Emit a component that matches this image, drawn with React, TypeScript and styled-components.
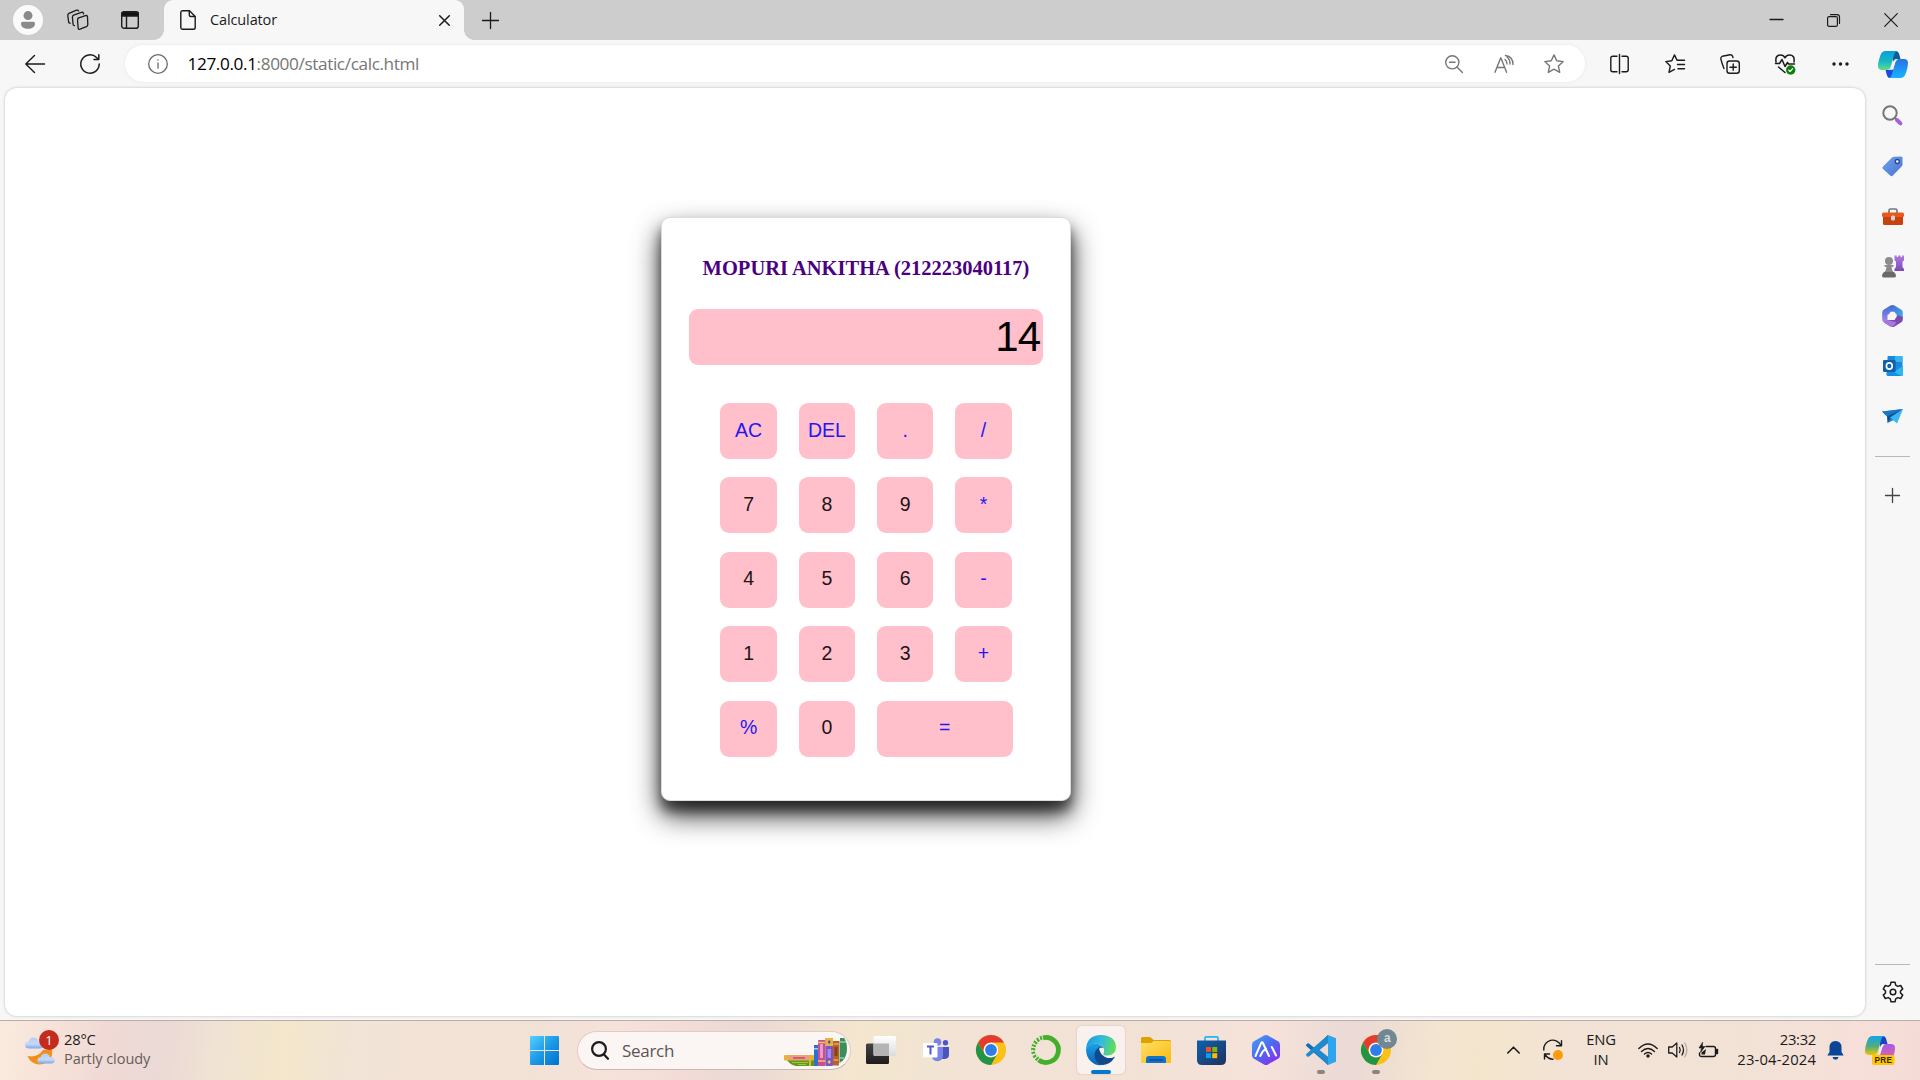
import React from 'react';
import styled, { createGlobalStyle } from 'styled-components';

const GlobalStyle = createGlobalStyle`
  *, *::before, *::after { box-sizing: border-box; }
  body { margin: 0; overflow: hidden; background: #f7f7f7; }
`;

const uiFont = `"Open Sans", "Noto Sans", sans-serif`;

const Desktop = styled.div`
  width: 1920px;
  height: 1080px;
  display: flex;
  flex-direction: column;
  overflow: hidden;
  font-family: ${uiFont};
  color: #1b1b1b;
`;

const Svg = styled.svg`
  display: block;
  flex: none;
  overflow: visible;
`;

const Slot = styled.div<{ $w: number }>`
  width: ${p => p.$w}px;
  flex: none;
  display: flex;
  align-items: center;
  justify-content: center;
`;

/* ---------- title bar ---------- */

const TitleBar = styled.header`
  height: 40px;
  flex: none;
  display: flex;
  align-items: stretch;
  background: #cdcdcd;
`;

const Avatar = styled.div`
  width: 30px;
  height: 30px;
  border-radius: 50%;
  background: #fafafa;
  display: flex;
  align-items: center;
  justify-content: center;
`;

const Tab = styled.div`
  position: relative;
  width: 300px;
  height: 40px;
  margin-left: 4px;
  padding: 0 11px 0 16px;
  display: flex;
  align-items: center;
  background: #f7f7f7;
  border-radius: 9px 9px 0 0;
  &::before, &::after {
    content: '';
    position: absolute;
    bottom: 0;
    width: 10px;
    height: 10px;
  }
  &::before {
    left: -10px;
    background: radial-gradient(circle at 0 0, transparent 9.5px, #f7f7f7 10px);
  }
  &::after {
    right: -10px;
    background: radial-gradient(circle at 100% 0, transparent 9.5px, #f7f7f7 10px);
  }
`;

const TabTitle = styled.span`
  flex: 1;
  margin-left: 14px;
  font-size: 14.5px;
  line-height: 20px;
  letter-spacing: -0.12px;
`;

const WindowButtons = styled.div`
  margin-left: auto;
  padding-right: 1px;
  display: flex;
`;

/* ---------- toolbar ---------- */

const Toolbar = styled.div`
  height: 47px;
  flex: none;
  display: flex;
  align-items: center;
  padding-left: 7px;
  background: #f7f7f7;
`;

const AddressBar = styled.div`
  width: 1460px;
  height: 37px;
  margin: 0 6px 0 7px;
  display: flex;
  align-items: center;
  border-radius: 19px;
  background: #fff;
  box-shadow: 0 0 4px rgba(0, 0, 0, 0.06);
`;

const Url = styled.div`
  flex: 1;
  margin-left: -2.5px;
  font-size: 17.2px;
  line-height: 24px;
  letter-spacing: -0.38px;
  color: #767676;
  white-space: nowrap;
  b { font-weight: 400; color: #000; }
`;

const CopilotButton = styled.div`
  width: 51px;
  flex: none;
  display: flex;
  justify-content: center;
  padding-top: 2px;
`;

/* ---------- browser body ---------- */

const Body = styled.main`
  height: 933px;
  flex: none;
  display: flex;
  padding: 1px 0 4px 5px;
  background: #f7f7f7;
`;

const Page = styled.section`
  width: 1860px;
  height: 928px;
  border-radius: 12px;
  background: #fff;
  box-shadow: 0 0 3px rgba(0, 0, 0, 0.25);
  display: flex;
  align-items: flex-start;
  padding: 129px 0 0 656px;
`;

const Sidebar = styled.aside`
  width: 55px;
  margin-bottom: -3px;
  display: flex;
  flex-direction: column;
  align-items: center;
`;

const SideCell = styled.div<{ $h?: number }>`
  height: ${p => p.$h ?? 50}px;
  width: 55px;
  flex: none;
  display: flex;
  align-items: center;
  justify-content: center;
`;

const SideRule = styled.div`
  width: 35px;
  height: 1px;
  flex: none;
  background: #b9b9b9;
`;

const Spacer = styled.div`
  flex: 1;
`;

/* ---------- calculator ---------- */

const Calculator = styled.div`
  width: 410px;
  height: 583.5px;
  border: 1px solid #dcdcdc;
  border-radius: 9px;
  background: #fff;
  display: flex;
  flex-direction: column;
  align-items: center;
  box-shadow: 0 14px 28px rgba(0, 0, 0, 0.8), 0 10px 12px rgba(0, 0, 0, 0.5);
`;

const Heading = styled.h2`
  margin: 36px 0 0;
  font: bold 20.5px/28px "Liberation Serif", serif;
  color: #4b0082;
  white-space: nowrap;
`;

const Display = styled.output`
  width: 354px;
  height: 56px;
  margin-top: 27px;
  padding: 0 3px 0 0;
  border-radius: 9px;
  background: #ffc0cb;
  text-align: right;
  font: 42px/56px "Liberation Sans", sans-serif;
  letter-spacing: -1px;
  color: #000;
`;

const Keys = styled.div`
  margin-top: 38px;
  display: grid;
  grid-template-columns: repeat(4, 56.2px);
  grid-auto-rows: 56.1px;
  gap: 18.3px 22.1px;
`;

const Key = styled.button<{ $op?: boolean; $wide?: boolean }>`
  width: ${p => (p.$wide ? '135.500px' : 'auto')};
  grid-column: ${p => (p.$wide ? 'span 2' : 'auto')};
  padding: 0 0 2px;
  border: 0;
  border-radius: 9px;
  background: #ffc0cb;
  font: 19.5px "Liberation Sans", sans-serif;
  color: ${p => (p.$op ? '#2416f5' : '#1c1416')};
`;

const keys: { label: string; op?: boolean; wide?: boolean }[] = [
  { label: 'AC', op: true }, { label: 'DEL', op: true }, { label: '.', op: true }, { label: '/', op: true },
  { label: '7' }, { label: '8' }, { label: '9' }, { label: '*', op: true },
  { label: '4' }, { label: '5' }, { label: '6' }, { label: '-', op: true },
  { label: '1' }, { label: '2' }, { label: '3' }, { label: '+', op: true },
  { label: '%', op: true }, { label: '0' }, { label: '=', op: true, wide: true },
];

/* ---------- taskbar ---------- */

const Taskbar = styled.footer`
  height: 60px;
  flex: none;
  display: flex;
  align-items: center;
  padding-bottom: 1px;
  border-top: 1px solid #b8aea8;
  background: linear-gradient(97deg,
    #faeadd 0, #f7e3d9 50px, #f1dad6 105px, #ead9d5 165px, #f0e2d4 215px, #f4e7cb 285px,
    #f2e4d6 350px, #f2e2d6 540px, #f6e2da 620px, #f3dcd7 680px, #ead9d5 745px, #f4e6cf 850px, #f3e6cf 880px,
    #f2e3d6 960px, #f2e2d6 1150px, #f6e2da 1260px, #ead9d5 1345px, #f3e5d0 1430px, #f4e6cd 1480px,
    #f2e3d6 1560px, #f2e2d6 1740px, #f6dfd9 1860px, #f4dad6 1920px);
`;

const Weather = styled.div`
  width: 517px;
  padding-left: 25px;
  display: flex;
  align-items: center;
`;

const WeatherIcon = styled.div`
  position: relative;
  width: 39px;
  height: 46px;
`;

const Badge = styled.span`
  position: absolute;
  left: 14px;
  top: 3px;
  width: 20px;
  height: 20px;
  border-radius: 50%;
  background: #c42b1c;
  color: #fff;
  font-size: 13px;
  line-height: 20px;
  text-align: center;
`;

const Lines = styled.div<{ $align?: string }>`
  display: flex;
  flex-direction: column;
  padding-bottom: 2px;
  font-size: 14.8px;
  line-height: 20px;
  letter-spacing: -0.25px;
  text-align: ${p => p.$align ?? 'left'};
  white-space: nowrap;
`;

const Muted = styled.span`
  color: #635d59;
  font-size: 14.5px;
  letter-spacing: -0.05px;
`;

const SearchBox = styled.div`
  width: 274px;
  height: 39px;
  margin: 0 2px 0 5px;
  padding: 0 2px 0 13px;
  display: flex;
  align-items: center;
  border: 1px solid #ddcdc7;
  border-bottom-color: #c9b8b2;
  border-radius: 20px;
  background: #fbf6f3;
  font-size: 17px;
  letter-spacing: -0.3px;
  color: #5b5552;
`;

const SearchLabel = styled.span`
  flex: 1;
  margin-left: 13px;
`;

const SearchArt = styled.div`
  padding-top: 4px;
`;

const AppButton = styled.div<{ $active?: boolean }>`
  position: relative;
  width: 48px;
  height: 48px;
  margin: 0 3.55px;
  flex: none;
  border-radius: 5px;
  display: flex;
  align-items: center;
  justify-content: center;
  background: ${p => (p.$active ? '#f9f1ed' : 'transparent')};
  box-shadow: ${p => (p.$active ? '0 0 1px 1px rgba(180,150,140,.18)' : 'none')};
`;

const Running = styled.span<{ $active?: boolean }>`
  position: absolute;
  bottom: 0;
  left: 50%;
  transform: translateX(-50%);
  width: ${p => (p.$active ? 20 : 8)}px;
  height: 4px;
  border-radius: 2px;
  background: ${p => (p.$active ? '#0078d4' : '#8b8380')};
`;

const ProfileBadge = styled.span`
  position: absolute;
  left: 25px;
  top: 3px;
  width: 20px;
  height: 20px;
  border-radius: 50%;
  background: #718792;
  color: #d5dde1;
  font: bold 12px/19px "Liberation Sans", sans-serif;
  text-align: center;
`;

const Tray = styled.div`
  margin-left: auto;
  display: flex;
  align-items: center;
`;

const Clock = styled(Lines)`
  width: 89px;
  padding-right: 1px;
  letter-spacing: 0.15px;
`;

const Time = styled.span`
  letter-spacing: -0.3px;
`;

/* ---------- line icons ---------- */

type LineProps = { w: number; h: number; c?: string; s?: number; children: React.ReactNode };
const Line = ({ w, h, c = '#1b1b1b', s = 1.3, children }: LineProps) => (
  <Svg width={w} height={h} viewBox={`0 0 ${w} ${h}`} fill="none" stroke={c} strokeWidth={s} strokeLinecap="round" strokeLinejoin="round">
    {children}
  </Svg>
);

const Person = () => (
  <Svg width="14" height="18" viewBox="0 0 14 18" fill="#8a8a8a">
    <circle cx="7" cy="4.6" r="4.5" />
    <path d="M1.6 10.800h10.800a1.600 1.600 0 0 1 1.600 1.600c0 3.300-3 5.400-7 5.400s-7-2.100-7-5.400a1.600 1.600 0 0 1 1.600-1.600z" />
  </Svg>
);

const Workspaces = () => (
  <Line w={22} h={22} s={1.3}>
    <path d="M11 9.200 18.500 6.600q1.800-.5 2 1.200l.3 7.800q0 1.500-1.400 2.100l-6.400 2.500q-1.600.5-1.800-1l-.7-8q0-1.500 1.200-2z" />
    <path d="M7.500 16.600q-1.200.1-1.400-1.200l-.7-7.200q0-1.500 1.200-2l7.800-2.900q1.600-.4 2 .9l.1.600" />
    <path d="M3.200 14.200q-1.300.1-1.600-1.200L.8 6.300q0-1.500 1.200-2L9.500 1.200q1.600-.5 2.100.7" />
  </Line>
);

const TabActions = () => (
  <Line w={18} h={18} s={1.4}>
    <rect x="0.700" y="0.700" width="16.600" height="16.600" rx="2.400" />
    <path d="M1 1.500h16v3.500H1z" fill="#111" />
    <path d="M5.500 5v12" />
  </Line>
);

const Doc = () => (
  <Line w={16} h={20} s={1.4}>
    <path d="M2.500.8h7L15.200 6.500v11a1.800 1.800 0 0 1-1.800 1.800H2.500A1.800 1.800 0 0 1 .8 17.500v-15A1.800 1.800 0 0 1 2.500.8z" />
    <path d="M9.300 1v4a1.500 1.500 0 0 0 1.500 1.500H15" />
  </Line>
);

const Cross = ({ n, s = 1.300 }: { n: number; s?: number }) => (
  <Line w={n} h={n} s={s}><path d={`M.7.7 ${n - 0.7} ${n - 0.7}M${n - 0.7} .7.7 ${n - 0.7}`} /></Line>
);

const Plus = ({ n, c }: { n: number; c?: string }) => (
  <Line w={n} h={n} s={1.300} c={c}><path d={`M${n / 2} .5V${n - 0.5}M.5 ${n / 2}H${n - 0.5}`} /></Line>
);

const Gear = () => (
  <Line w={22} h={22} s={1.5}>
    <path d="M9 1.200h4l.7 3 2.100 1.200 2.900-.9 2 3.400-2.200 2.100v2l2.200 2.100-2 3.400-2.900-.9-2.100 1.200-.7 3H9l-.7-3-2.100-1.200-2.900.9-2-3.400 2.200-2.100v-2L1.300 7.900l2-3.400 2.900.9 2.100-1.200z" />
    <circle cx="11" cy="11" r="2.800" />
  </Line>
);

/* ---------- coloured icons ---------- */

const Copilot = ({ pre }: { pre?: boolean }) => {
  const id = pre ? 'cpre' : 'cp';
  return (
    <Svg width="30" height={pre ? 29 : 27} viewBox={pre ? '0 0 30 29' : '0 0 30 27'}>
      <defs>
        <linearGradient id={id + 'a'} x1="0" y1="0" x2="0" y2="1">
          <stop offset="0" stopColor={pre ? '#12a5ec' : '#0a9ddb'} /><stop offset=".55" stopColor={pre ? '#4fae7c' : '#18b8c4'} /><stop offset="1" stopColor={pre ? '#f5c400' : '#5fdc8c'} />
        </linearGradient>
        <linearGradient id={id + 'b'} x1="0" y1="0" x2="0" y2="1">
          <stop offset="0" stopColor={pre ? '#a45be8' : '#2a72e0'} /><stop offset="1" stopColor={pre ? '#f06a8c' : '#16b4ff'} />
        </linearGradient>
      </defs>
      <path d="M14 0h4q2.200 0 3 2.500L22.500 8H19q-3 0-4 3z" fill={pre ? '#1645c8' : '#10599a'} />
      <path d="M16 27h-4q-2.200 0-3-2.500L7.500 19H11q3 0 4-3z" fill={pre ? '#f29b2c' : '#1a49dc'} />
      <path d="M7.500 0H19q-2 .5-3 4l-3 11q-1 4-4 4H4q-4 0-4-4Q0 11 2.500 4 4 0 7.500 0z" fill={`url(#${id}a)`} />
      <path d="M22.500 27H11q2-.5 3-4l3-11q1-4 4-4h5q4 0 4 4 0 4-2.500 11-1.500 4-5 4z" fill={`url(#${id}b)`} />
      <path d="M17 8.500h2.500q-1.700.8-2.300 3L15 18.300q-.8 1-2.300.9.900-.6 1.600-3z" fill="#f7f7f7" />
      {pre && <rect x="7" y="19" width="22.500" height="10" rx="2" fill="#fcc608" />}
      {pre && <text x="18.300" y="27" textAnchor="middle" fontFamily="Liberation Sans, sans-serif" fontWeight="bold" fontSize="8.200" letterSpacing=".3" fill="#3a2600">PRE</text>}
    </Svg>
  );
};

const SideSearch = () => (
  <Svg width="21" height="21" viewBox="0 0 21 21" fill="none">
    <circle cx="8" cy="8" r="6.700" stroke="#767676" strokeWidth="2" />
    <path d="m12.800 12.800 1.500 1.500" stroke="#767676" strokeWidth="2" />
    <path d="m15 15 3.400 3.400" stroke="#a164d8" strokeWidth="4" strokeLinecap="round" />
  </Svg>
);

const Tag = () => (
  <Svg width="21" height="21" viewBox="0 0 21 21">
    <defs><linearGradient id="tg" x1="0" y1="0" x2="1" y2="1"><stop offset="0" stopColor="#6fa4ee" /><stop offset="1" stopColor="#4a72d0" /></linearGradient></defs>
    <path d="M12 .8 19 .5q1.500 0 1.500 1.500v6.600q0 1-.7 1.700l-9 9.200q-1.300 1.300-2.600 0L1 13q-1.300-1.300 0-2.600l9-8.900q.8-.7 2-.7z" fill="url(#tg)" />
    <circle cx="15.300" cy="5.500" r="2" fill="#fff" stroke="#24468e" strokeWidth="1.300" />
  </Svg>
);

const Toolbox = () => (
  <Svg width="22" height="18" viewBox="0 0 22 18">
    <path d="M7 5V2.500Q7 1 8.500 1h5Q15 1 15 2.500V5" fill="none" stroke="#777" strokeWidth="1.700" />
    <path d="M1 8h20v7.500q0 1.500-1.500 1.500h-17Q1 17 1 15.500z" fill="#c8420f" />
    <path d="M1.500 4.500h19q1.500 0 1.500 1.500v1.500Q22 9 20.500 9h-19Q0 9 0 7.500V6q0-1.500 1.500-1.500z" fill="#e85a1c" />
    <rect x="9" y="7.500" width="4" height="5" rx="1.500" fill="#d4d4d4" />
  </Svg>
);

const Games = () => (
  <Svg width="22" height="23" viewBox="0 0 22 23">
    <defs><linearGradient id="gm" x1="0" y1="0" x2="0" y2="1"><stop offset="0" stopColor="#b47be0" /><stop offset="1" stopColor="#7a48b8" /></linearGradient></defs>
    <path d="M12.500.5h2.200V2h1.500V.5h2.400V2h1.500V.5H22v5l-1.500 1v5.500l1.500 2v2H12.500v-2l1.500-2V6.500l-1.500-1z" fill="url(#gm)" />
    <circle cx="7" cy="6" r="4" fill="#8c8c8c" />
    <path d="M2.500 10h9v1.800H9.500q.2 4 2 5.200H2.500q1.800-1.200 2-5.200h-2z" fill="#8a8a8a" />
    <path d="M2 17h10q2 2 2 3.700Q14 22.500 12.500 22.500h-11Q0 22.500 0 20.700 0 19 2 17z" fill="#6a6a6a" />
  </Svg>
);

const M365 = () => (
  <Svg width="21" height="22" viewBox="0 0 21 22">
    <defs>
      <linearGradient id="m1" x1="0" y1="0" x2="1" y2="1"><stop offset="0" stopColor="#4a5ec8" /><stop offset="1" stopColor="#3fb6f0" /></linearGradient>
      <linearGradient id="m2" x1="0" y1="0" x2="0" y2="1"><stop offset="0" stopColor="#3a6fd8" /><stop offset="1" stopColor="#b98ae6" /></linearGradient>
    </defs>
    <path d="M8.500.6q2-1 4 0l6.500 4q1.800 1 1.800 3V13L14.500 9.500 10 6.500 6 4z" fill="url(#m1)" />
    <path d="M8.500.6 2 4.600Q.2 5.600.2 7.600v7q0 2 1.800 3l3.500 2V10L11 6.500z" fill="url(#m2)" />
    <path d="M20.800 12v2.600q0 2-1.800 3l-6.500 4q-2 1-4 0L2 17.600 6 15h6l3-5.500z" fill="#7d4ab0" />
    <path d="m2 17.600 6.500 4q1 .4 2 .4l4-4.500L6 15z" fill="#a878e0" />
    <path d="M8.500 6.800h4L15 11l-2.500 4h-4L6.200 11z" fill="#f7f7f7" />
  </Svg>
);

const Outlook = () => (
  <Svg width="20" height="20" viewBox="0 0 20 20">
    <path d="M5.500 0h13q1 0 1 1v10H4.500V1q0-1 1-1z" fill="#1a8ad8" />
    <path d="M12 0h6.500q1 0 1 1v5H12z" fill="#36b5f0" />
    <path d="M3.500 10 19.800 10v8.500q0 1.500-1.500 1.500H5q-1.500 0-1.500-1.500z" fill="#1490df" />
    <path d="m19.800 10-9 6 7.500 4q1.500 0 1.500-1.500z" fill="#2fb8f2" />
    <rect x="0" y="4" width="12.600" height="12" rx="1.200" fill="#0f5fb4" />
    <ellipse cx="6.300" cy="10" rx="2.900" ry="3.200" fill="none" stroke="#fff" strokeWidth="1.700" />
  </Svg>
);

const Plane = () => (
  <Svg width="21" height="15" viewBox="0 0 21 15">
    <path d="M0 2.500 21 0 6 8z" fill="#2b9de2" />
    <path d="M0 2.500 5 7.500 21 0z" fill="#1876c4" />
    <path d="M5 7.200 21 0 5.500 14z" fill="#0b4f93" />
    <path d="M21 0 8 8.500l7 6z" fill="#39b8f4" />
    <path d="m5.500 14 3-5 3 2z" fill="#1b7ccc" />
  </Svg>
);

const Cloudy = () => (
  <Svg width="32" height="30" viewBox="0 0 32 30">
    <defs>
      <linearGradient id="cl" x1="0" y1="0" x2="0" y2="1"><stop offset="0" stopColor="#b5cdf2" /><stop offset=".6" stopColor="#c4dafa" /><stop offset="1" stopColor="#7fa6e8" /></linearGradient>
      <linearGradient id="mn" x1="0" y1="0" x2="1" y2="1"><stop offset="0" stopColor="#e8801a" /><stop offset="1" stopColor="#f6a21c" /></linearGradient>
    </defs>
    <path d="M27 13q2 15-13.500 15.500Q6 28 2.500 20q10 2 15.500-6z" fill="url(#mn)" />
    <path d="M4.500 12.500Q0 12.500 0 9.200 0 6 3.500 5.600 4.500 1.500 8.500 1.500t5 4.200Q18 5.500 18 9.500q0 3-3.500 3z" fill="url(#cl)" />
    <path d="M16 27.500q-3.500 0-3.500-3 0-2.800 3-3.200 1-3.800 5-3.800 3.500 0 4.300 3.500 5 0 5 3.500 0 3-3.500 3z" fill="url(#cl)" />
  </Svg>
);

const WindowsLogo = () => (
  <Svg width="29" height="29" viewBox="0 0 29 29">
    <defs><linearGradient id="wn" x1="0" y1="0" x2="29" y2="29" gradientUnits="userSpaceOnUse"><stop offset="0" stopColor="#55d2ff" /><stop offset=".5" stopColor="#1c9ae6" /><stop offset="1" stopColor="#0070cf" /></linearGradient></defs>
    <path d="M1 0h13v14H0V1q0-1 1-1zM15 0h13q1 0 1 1v13H15zM0 15h14v14H1q-1 0-1-1zM15 15h14v13q0 1-1 1H15z" fill="url(#wn)" />
  </Svg>
);

const Books = () => (
  <Svg width="64" height="28" viewBox="0 0 64 28">
    <path d="M3 22h28v6H12q-6-1-9-6z" fill="#5f9a22" />
    <path d="M8 24.500h16M14 26.500h8" stroke="#9fc83c" strokeWidth="1.200" />
    <rect x="25" y="22" width="2" height="6" fill="#e8b830" />
    <rect x="0" y="17" width="30" height="5.500" rx="1" fill="#e6b23c" />
    <rect x="5" y="17.500" width="20" height="4.500" fill="#f09a8a" />
    <rect x="9" y="19" width="12" height="1.800" fill="#c9605a" />
    <rect x="30" y="7" width="4" height="21" fill="#2f6fd0" />
    <rect x="30" y="10" width="4" height="1.500" fill="#a8cdf4" />
    <rect x="34" y="2" width="7.500" height="26" rx="1" fill="#c94f92" />
    <rect x="36" y="6" width="3" height="14" fill="#ec9cc4" />
    <path d="M34 4.500h7.500M34 23h7.500" stroke="#efc85c" strokeWidth="1.500" />
    <rect x="41.500" y="0" width="7.500" height="28" rx="1" fill="#7a55c8" />
    <rect x="41.500" y="0" width="7.500" height="8" fill="#e8b53c" />
    <path d="m45.200 2 1.500 2-1.500 2-1.500-2z" fill="#6a3cb0" />
    <rect x="43.500" y="11" width="3.500" height="9" fill="#a78be8" />
    <path d="m45.200 22 1.800 2-1.800 2-1.800-2z" fill="#f0c850" />
    <path d="M49 3h6.500l-.5 24.500h-6z" fill="#b8622a" />
    <path d="M49.500 6h5.500M49.500 22h5" stroke="#e8a850" strokeWidth="1.500" />
    <rect x="50.500" y="9" width="3" height="9" fill="#8a3f18" />
    <path d="M56 0h4q3 4 3 10.500 0 7-4 12l-3.500 2.500z" fill="#3a8f58" />
    <path d="M56 4h6M56 20h4.500" stroke="#8fcf9c" strokeWidth="1.300" />
  </Svg>
);

const TaskView = () => (
  <Svg width="30" height="28" viewBox="0 0 30 28">
    <defs>
      <linearGradient id="tv" x1="0" y1="0" x2="0" y2="1"><stop offset="0" stopColor="#444" /><stop offset="1" stopColor="#1c1c1c" /></linearGradient>
      <linearGradient id="tw" x1="0" y1="0" x2="0" y2="1"><stop offset="0" stopColor="#fff" /><stop offset="1" stopColor="#dcdcdc" /></linearGradient>
    </defs>
    <rect x="0" y="7.500" width="23" height="20.500" rx="1.500" fill="url(#tv)" />
    <rect x="7.500" y="0" width="22.500" height="20" rx="1.500" fill="url(#tw)" />
    <path d="M7.500 7.500H23V20H9q-1.500 0-1.500-1.500z" fill="#b4b4b4" />
  </Svg>
);

const Teams = () => (
  <Svg width="26" height="24" viewBox="0 0 26 24">
    <circle cx="22.500" cy="4.800" r="2.700" fill="#4f57c8" />
    <path d="M18 9h8v7.500q0 4-4 4.500h-4z" fill="#4b53bc" />
    <circle cx="14.500" cy="4" r="3.800" fill="#7b83eb" />
    <path d="M8.500 9h11.500v8q0 6-5.700 6.300Q9 23 8.500 17z" fill="#7b83eb" />
    <rect x="0" y="5" width="14.500" height="14.500" rx="1" fill="#fff" />
    <path d="M4 8.500h7M7.500 8.500v8" stroke="#5059c9" strokeWidth="2" />
  </Svg>
);

const Chrome = () => (
  <Svg width="30" height="30" viewBox="0 0 30 30">
    <circle cx="15" cy="15" r="15" fill="#fbc116" />
    <path d="M2 7.500A15 15 0 0 1 28 7.500H15A7.500 7.500 0 0 0 8.500 18.700z" fill="#e33b2e" />
    <path d="M2 7.500 8.500 18.750A7.500 7.500 0 0 0 21.500 18.750L15 30A15 15 0 0 1 2 7.500z" fill="#219447" />
    <circle cx="15" cy="15" r="7.300" fill="#fff" />
    <circle cx="15" cy="15" r="5.900" fill="#2f7de9" />
  </Svg>
);

const Anaconda = () => (
  <Svg width="30" height="30" viewBox="0 0 30 30" fill="none" stroke="#43b02a">
    <path d="M12 2.800A12.500 12.500 0 1 1 7.500 25" strokeWidth="4.800" />
    <path d="M11 2.800A12.500 12.500 0 0 0 6.800 24.300" strokeWidth="4.300" strokeDasharray="2.200 1.300" />
    <path d="M12.500 5A10.500 10.500 0 0 0 6.500 21.500" stroke="#f3e4d9" strokeWidth="1.100" strokeDasharray="2 1.600" />
    <path d="M9 2.500A13.500 13.500 0 0 0 3.500 22" stroke="#f3e4d9" strokeWidth="1.100" strokeDasharray="1.500 2.300" />
  </Svg>
);

const Edge = () => (
  <Svg width="30" height="30" viewBox="0 0 30 30">
    <defs>
      <linearGradient id="e1" x1="0" y1=".4" x2="1" y2=".6"><stop offset="0" stopColor="#1a9ce0" /><stop offset=".5" stopColor="#35bdd8" /><stop offset="1" stopColor="#66e04c" /></linearGradient>
      <linearGradient id="e2" x1="0" y1="0" x2="0" y2="1"><stop offset="0" stopColor="#1ba1e6" /><stop offset="1" stopColor="#0c62b8" /></linearGradient>
    </defs>
    <path d="M0 14Q1 0 15 0q14.500.5 15 12 0 8-8.500 8.500-4.500 0-4.300-1.800.8-1 .8-3Q17.500 8.500 9 8.500 2.500 9 0 14z" fill="url(#e1)" />
    <path d="M0 14q3-5.800 9.500-5.500 5.500.3 7.500 4-4.500.3-5.500 5.500-.5 7 6 11.800Q10 31.500 4.500 26 0 21.500 0 14z" fill="url(#e2)" />
    <path d="M12.500 12.800q3-2 4.700 0-2 2.200-1.200 5 2 5 8 5 2.500-.2 4-1 1-.2.500.8Q24.500 29.500 17 30 9 28 8.500 20.500q0-5 4-7.700z" fill="#114a8b" />
    <path d="M13 14q2-2.300 4.200-.8 1.300 1.300.6 3.500-1.500 2-.5 3.200 1.500 1.600 5.500 1.500 4-.2 6-2-.4 2-1.500 2.800-2.500 1.200-5.300.8-6.500-1-9-9z" fill="#f9f1ed" />
  </Svg>
);

const Explorer = () => (
  <Svg width="30" height="27" viewBox="0 0 30 27">
    <defs><linearGradient id="ex" x1="0" y1="0" x2="1" y2="1"><stop offset="0" stopColor="#ffdd6a" /><stop offset="1" stopColor="#fbbc0c" /></linearGradient></defs>
    <path d="M0 1.500Q0 0 1.500 0h7q1 0 2 1l2 2H28.500Q30 3 30 4.500V10H0z" fill="#dfa000" />
    <path d="M0 6h9.500q1 0 2-1l1-1H28.500Q30 4 30 5.500v19q0 1.500-1.500 1.500h-27Q0 26 0 24.500z" fill="url(#ex)" />
    <path d="M5 26v-4q0-3 3-3h14q3 0 3 3v4z" fill="#1173cc" />
    <path d="M8.500 23h13" stroke="#0a4c98" strokeWidth="1.300" strokeLinecap="round" />
  </Svg>
);

const Store = () => (
  <Svg width="29" height="29" viewBox="0 0 29 29">
    <defs><linearGradient id="st" x1="0" y1="0" x2="1" y2="1"><stop offset="0" stopColor="#0c62b0" /><stop offset="1" stopColor="#22305e" /></linearGradient></defs>
    <path d="M8 5V2q0-1.200 1.200-1.200h10.600Q21 .8 21 2v3" fill="none" stroke="#22b8f0" strokeWidth="1.700" />
    <path d="M0 4.500h29V24q0 5-5 5H5q-5 0-5-5z" fill="url(#st)" />
    <path d="M9 11h5v5H9z" fill="#f25022" /><path d="M15.200 11h5v5h-5z" fill="#7fba00" />
    <path d="M9 17.200h5v5H9z" fill="#00a4ef" /><path d="M15.200 17.200h5v5h-5z" fill="#ffb900" />
  </Svg>
);

const HexApp = () => (
  <Svg width="28" height="30" viewBox="0 0 28 30">
    <defs><linearGradient id="hx" x1="0" y1="0" x2=".8" y2="1"><stop offset="0" stopColor="#4aa0f0" /><stop offset=".5" stopColor="#4b6cf0" /><stop offset="1" stopColor="#8a2cf0" /></linearGradient></defs>
    <path d="M12 .6q2-1 4 0l10 5.700q2 1.200 2 3.300v10.800q0 2.100-2 3.300l-10 5.700q-2 1-4 0l-10-5.700q-2-1.200-2-3.300V9.600q0-2.100 2-3.300z" fill="url(#hx)" />
    <path d="M3.500 21 9.200 7.800q.8-1.300 1.600 0L17 21M8.300 21l2.200-4.200L14 13.500M19.800 12l4.300 8.500" fill="none" stroke="#fff" strokeWidth="2" strokeLinecap="round" strokeLinejoin="round" />
  </Svg>
);

const VsCode = () => (
  <Svg width="30" height="30" viewBox="0 0 30 30">
    <path d="M22 0 8.500 13 3 8.500Q2 8 1.300 8.500L.3 9.600q-.6.700 0 1.400L22 30V21.800L22 8z" fill="#0f6fb5" />
    <path d="M22 30 8.500 17 3 21.500q-1 .5-1.700 0L.3 20.400q-.6-.7 0-1.400L22 0v8.200z" fill="#2089d0" />
    <path d="M22 0 30 3.200V26.800L22 30z" fill="#2fa5ee" />
    <path d="M22 8.300 13.500 15 22 21.700z" fill="#eddcd7" />
  </Svg>
);

const App = () => (
  <Desktop>
    <GlobalStyle />
    <TitleBar>
      <Slot $w={56}><Avatar><Person /></Avatar></Slot>
      <Slot $w={43}><Workspaces /></Slot>
      <Slot $w={61}><TabActions /></Slot>
      <Tab>
        <Doc />
        <TabTitle>Calculator</TabTitle>
        <Slot $w={18}><Cross n={11} s={1.5} /></Slot>
      </Tab>
      <Slot $w={53}><Plus n={17} /></Slot>
      <WindowButtons>
        <Slot $w={57}><Line w={13} h={2}><path d="M0 .5h13" /></Line></Slot>
        <Slot $w={57}>
          <Line w={13} h={13} s={1.200}>
            <rect x=".6" y="2.600" width="9.800" height="9.800" rx="1.500" />
            <path d="M3.500.6h6.500a2.500 2.500 0 0 1 2.500 2.500v6.400" />
          </Line>
        </Slot>
        <Slot $w={57}><Cross n={14} s={1.200} /></Slot>
      </WindowButtons>
    </TitleBar>

    <Toolbar>
      <Slot $w={55.500}><Line w={20} h={18} s={1.400}><path d="M19.500 9H.8M9.500.5.8 9l8.700 8.500" /></Line></Slot>
      <Slot $w={55.500}><Line w={20} h={20} s={1.500}><path d="M19.200 10A9.200 9.200 0 1 1 16.500 3.500L18.700 5.500M18.800.8v4.800H14" /></Line></Slot>
      <AddressBar>
        <Slot $w={65}><Line w={20} h={20} c="#6b6b6b" s={1.300}><circle cx="10" cy="10" r="9.300" /><path d="M10 9v5.200M10 6v.3" /></Line></Slot>
        <Url><b>127.0.0.1</b>:8000/static/calc.html</Url>
        <Slot $w={50}><Line w={18} h={18} c="#767676" s={1.400}><circle cx="7.300" cy="7.300" r="6.600" /><path d="m12 12 5.400 5.400M4.500 7.300h5.600" /></Line></Slot>
        <Slot $w={50}><Line w={20} h={18} c="#767676" s={1.400}><path d="m1 17.300 5.800-14.500 5.800 14.500M3 12.500h7.600M11 4.500q2 1.500 2 4.500M13 2q3.200 2.500 3 7M11.500.5q7.500 1 7.500 9" /></Line></Slot>
        <Slot $w={50}><Line w={20} h={20} c="#767676" s={1.400}><path d="m10 .9 2.700 5.900 6.500.8-4.800 4.400 1.300 6.400L10 15.200l-5.700 3.200L5.600 12 .8 7.600l6.500-.8z" /></Line></Slot>
        <Slot $w={6} />
      </AddressBar>
      <Slot $w={56}><Line w={19} h={20} s={1.400}><path d="M7 2.300H2.800Q.8 2.300.8 4.300v11.400q0 2 2 2H7M12 2.300h4.200q2 0 2 2v11.400q0 2-2 2H12M9.500.5v19" /></Line></Slot>
      <Slot $w={55.300}><Line w={20} h={20} s={1.400}><path d="M12 6.300 9.500.9 6.800 6.800.8 7.600l4.500 4.400L4 18.400l5.500-3M12.500 6.300h7M12.500 10.500h7M13 14.700h6.500" /></Line></Slot>
      <Slot $w={55.300}><Line w={20} h={20} s={1.400}><rect x="7" y="7" width="12.300" height="12.300" rx="2.500" /><path d="M13.200 10v6.300M10 13.200h6.300M4 14.500Q1.800 9 .8 4.800q-.2-2 1.500-2.500L10 .8q2-.2 2.700 1.800l.3 1" /></Line></Slot>
      <Slot $w={55.300}>
        <Line w={20} h={20} s={1.500}>
          <path d="M1 8Q0 1 5.500 1 8.500 1 10 3.800 11.500 1 14.500 1 20 1 19 8M.5 9.500h4L7 5.500l3 7 2.500-4 1 1.500h6M3.500 13l6.500 5.500" />
          <circle cx="15.700" cy="16" r="4.700" fill="#107c10" stroke="none" />
          <path d="m13.700 16.200 1.300 1.300 2.700-2.800" stroke="#fff" strokeWidth="1.100" />
        </Line>
      </Slot>
      <Slot $w={54.300}><Svg width="17" height="4" viewBox="0 0 17 4" fill="#1b1b1b"><circle cx="2" cy="2" r="1.700" /><circle cx="8.500" cy="2" r="1.700" /><circle cx="15" cy="2" r="1.700" /></Svg></Slot>
      <CopilotButton><Copilot /></CopilotButton>
    </Toolbar>

    <Body>
      <Page>
        <Calculator>
          <Heading>MOPURI ANKITHA (212223040117)</Heading>
          <Display>14</Display>
          <Keys>
            {keys.map(k => <Key key={k.label} $op={k.op} $wide={k.wide}>{k.label}</Key>)}
          </Keys>
        </Calculator>
      </Page>
      <Sidebar>
        <SideCell $h={54}><SideSearch /></SideCell>
        <SideCell $h={48}><Tag /></SideCell>
        <SideCell $h={53}><Toolbox /></SideCell>
        <SideCell $h={47}><Games /></SideCell>
        <SideCell $h={52}><M365 /></SideCell>
        <SideCell $h={47}><Outlook /></SideCell>
        <SideCell $h={54}><Plane /></SideCell>
        <SideCell $h={13} />
        <SideRule />
        <SideCell $h={77}><Plus n={15} c="#444" /></SideCell>
        <Spacer />
        <SideRule />
        <SideCell $h={54}><Gear /></SideCell>
      </Sidebar>
    </Body>

    <Taskbar>
      <Weather>
        <WeatherIcon>
          <Svg width="32" height="46"><g transform="translate(0 9)"><Cloudy /></g></Svg>
          <Badge>1</Badge>
        </WeatherIcon>
        <Lines><span>28°C</span><Muted>Partly cloudy</Muted></Lines>
      </Weather>
      <Slot $w={55}><WindowsLogo /></Slot>
      <SearchBox>
        <Line w={18} h={19} s={2.200}><circle cx="8" cy="8" r="6.900" /><path d="m13 13.500 4 4.300" /></Line>
        <SearchLabel>Search</SearchLabel>
        <SearchArt><Books /></SearchArt>
      </SearchBox>
      <AppButton><TaskView /></AppButton>
      <AppButton><Teams /></AppButton>
      <AppButton><Chrome /></AppButton>
      <AppButton><Anaconda /></AppButton>
      <AppButton $active><Edge /><Running $active /></AppButton>
      <AppButton><Explorer /></AppButton>
      <AppButton><Store /></AppButton>
      <AppButton><HexApp /></AppButton>
      <AppButton><VsCode /><Running /></AppButton>
      <AppButton><Chrome /><ProfileBadge>a</ProfileBadge><Running /></AppButton>
      <Tray>
        <Slot $w={40}><Line w={13} h={8} s={1.600}><path d="M.8 7 6.500 1.200 12.200 7" /></Line></Slot>
        <Slot $w={40}>
          <Line w={20} h={20} s={1.400}>
            <path d="M.8 10A9 9 0 0 1 18 5.500M18.500.8v5H13.500M1.500 19v-5h5M2 14.500q3 4.700 8 4.700" />
            <circle cx="15" cy="15" r="5" fill="#ff9a0a" stroke="none" />
          </Line>
        </Slot>
        <Slot $w={56}><Lines $align="center"><span>ENG</span><span>IN</span></Lines></Slot>
        <Slot $w={38}>
          <Line w={20} h={15} s={1.400}>
            <path d="M.8 5.500Q10-3.500 19.200 5.500M3.500 8.500q6.500-6 13 0M6.500 11q3.500-3.200 7 0" />
            <circle cx="10" cy="13" r="1.700" fill="#1b1b1b" stroke="none" />
          </Line>
        </Slot>
        <Slot $w={21}>
          <Line w={20} h={16} s={1.300}>
            <path d="M.7 5h3.500L8.800 1v14L4.200 11H.7zM11.500 5.500q1.500 2.500 0 5M14 3q3 5 0 10" />
            <path d="M16.700 1q4.300 7 0 14" stroke="#b5aaa4" />
          </Line>
        </Slot>
        <Slot $w={40}>
          <Line w={20} h={16} s={1.400}>
            <path d="M8 4.500h7.500q2 0 2 2v6q0 2-2 2h-12q-2 0-2-2V11" />
            <path d="M18.500 7.500h1v4h-1z" fill="#1b1b1b" />
            <path d="M4.500.5 1 6h2.500L2.500 10.500 7 4.500H4.500z" fill="#1b1b1b" strokeWidth=".6" />
            <path d="M3.500 12.500v-2L8 7l-1 5.500z" fill="#1b1b1b" stroke="none" />
          </Line>
        </Slot>
        <Clock $align="right"><Time>23:32</Time><span>23-04-2024</span></Clock>
        <Slot $w={37}>
          <Svg width="17" height="19" viewBox="0 0 17 19" fill="#0b4596">
            <path d="M8.500 0q6 0 6 6.500V11l2.200 3.500H.3L2.500 11V6.500Q2.500 0 8.500 0zM5.500 16h6q-.5 2.700-3 2.700T5.500 16z" />
          </Svg>
        </Slot>
        <Slot $w={52}><Copilot pre /></Slot>
        <Slot $w={14} />
      </Tray>
    </Taskbar>
  </Desktop>
);

export default App;
